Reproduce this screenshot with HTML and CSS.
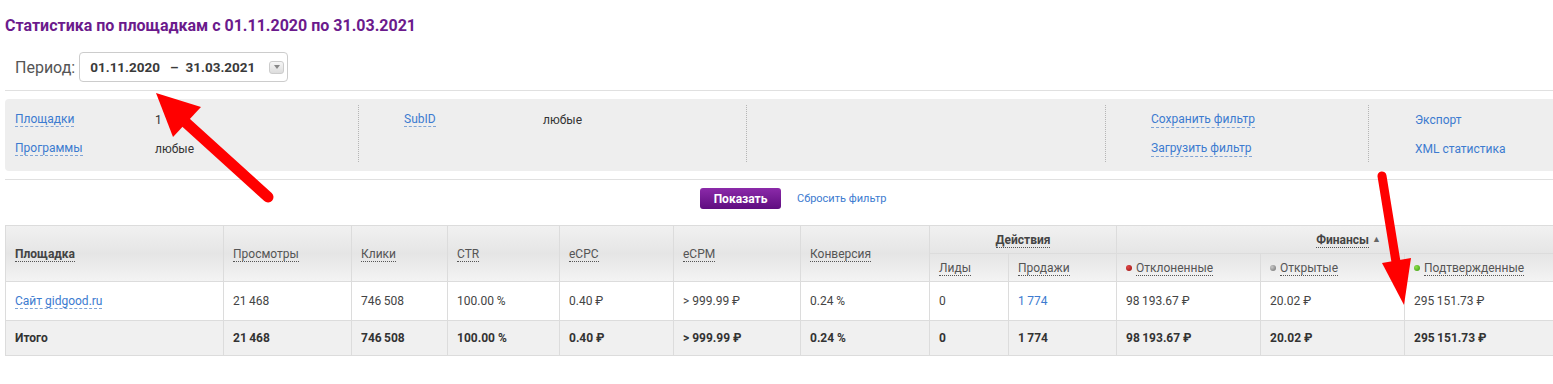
FILE: index.html
```html
<!DOCTYPE html>
<html lang="ru">
<head>
    <meta charset="UTF-8" />
    <title>Статистика по площадкам</title>
    <link rel="stylesheet" href="styles.css">
</head>
<body>
    <div class="page">
        <h1 class="title">Статистика по площадкам с 01.11.2020 по 31.03.2021</h1>

        <div class="period">
            <span class="period-label">Период:</span>
            <div class="date-box">
                <span class="date">01.11.2020</span>
                <span class="dash">&ndash;</span>
                <span class="date">31.03.2021</span>
                <span class="drop"><span class="drop-tri"></span></span>
            </div>
        </div>

        <div class="sep"></div>

        <div class="filter">
            <div class="fcol fcol-1">
                <div class="frow"><span class="flabel"><a class="link">Площадки</a></span><span class="fval">1 <i class="remove"></i></span></div>
                <div class="frow"><span class="flabel"><a class="link">Программы</a></span><span class="fval">любые</span></div>
            </div>
            <div class="fcol fcol-2">
                <div class="frow"><span class="flabel"><a class="link">SubID</a></span><span class="fval">любые</span></div>
            </div>
            <div class="fcol fcol-3"></div>
            <div class="fcol fcol-4">
                <div class="frow"><a class="link">Сохранить фильтр</a></div>
                <div class="frow"><a class="link">Загрузить фильтр</a></div>
            </div>
            <div class="fcol fcol-5">
                <div class="frow"><a class="plain-link">Экспорт</a></div>
                <div class="frow"><a class="plain-link">XML статистика</a></div>
            </div>
        </div>

        <div class="sep"></div>

        <div class="actions">
            <button class="btn-show">Показать</button>
            <a class="reset">Сбросить фильтр</a>
        </div>

        <table class="stats">
            <colgroup>
                <col style="width:218px"><col style="width:128px"><col style="width:96px">
                <col style="width:112px"><col style="width:114px"><col style="width:127px">
                <col style="width:129px"><col style="width:79px"><col style="width:108px">
                <col style="width:144px"><col style="width:144px"><col style="width:176px">
            </colgroup>
            <thead>
                <tr class="head-top">
                    <th rowspan="2"><span class="h h-main">Площадка</span></th>
                    <th rowspan="2"><span class="h">Просмотры</span></th>
                    <th rowspan="2"><span class="h">Клики</span></th>
                    <th rowspan="2"><span class="h">CTR</span></th>
                    <th rowspan="2"><span class="h">eCPC</span></th>
                    <th rowspan="2"><span class="h">eCPM</span></th>
                    <th rowspan="2"><span class="h">Конверсия</span></th>
                    <th colspan="2" class="group"><span class="h h-main">Действия</span></th>
                    <th colspan="3" class="group"><span class="h h-main">Финансы</span> <span class="sort">&#9650;</span></th>
                </tr>
                <tr class="head-sub">
                    <th><span class="h">Лиды</span></th>
                    <th><span class="h">Продажи</span></th>
                    <th><i class="dot dot-red"></i><span class="h">Отклоненные</span></th>
                    <th><i class="dot dot-grey"></i><span class="h">Открытые</span></th>
                    <th><i class="dot dot-green"></i><span class="h">Подтвержденные</span></th>
                </tr>
            </thead>
            <tbody>
                <tr class="row">
                    <td><a class="link">Сайт gidgood.ru</a></td>
                    <td>21&#8201;468</td>
                    <td>746&#8201;508</td>
                    <td>100.00 %</td>
                    <td>0.40 &#8381;</td>
                    <td>&gt; 999.99 &#8381;</td>
                    <td>0.24 %</td>
                    <td>0</td>
                    <td><span class="num-link">1&#8201;774</span></td>
                    <td>98&#8201;193.67 &#8381;</td>
                    <td>20.02 &#8381;</td>
                    <td>295&#8201;151.73 &#8381;</td>
                </tr>
                <tr class="total">
                    <td>Итого</td>
                    <td>21&#8201;468</td>
                    <td>746&#8201;508</td>
                    <td>100.00 %</td>
                    <td>0.40 &#8381;</td>
                    <td>&gt; 999.99 &#8381;</td>
                    <td>0.24 %</td>
                    <td>0</td>
                    <td>1&#8201;774</td>
                    <td>98&#8201;193.67 &#8381;</td>
                    <td>20.02 &#8381;</td>
                    <td>295&#8201;151.73 &#8381;</td>
                </tr>
            </tbody>
        </table>
    </div>

    <!-- red annotation arrows drawn over the screenshot -->
    <svg class="arrows" width="1553" height="384" viewBox="0 0 1553 384">
        <line x1="268" y1="197" x2="183" y2="120" stroke="#f00" stroke-width="11" stroke-linecap="round" />
        <polygon points="156,93 201,107 173,137" fill="#f00" />
        <line x1="1382" y1="176" x2="1396" y2="262" stroke="#f00" stroke-width="9" stroke-linecap="round" />
        <polygon points="1404,305 1411,258 1382,263" fill="#f00" />
    </svg>
</body>
</html>
```

FILE: styles.css
```css
html,
body {
    margin: 0;
    overflow: hidden;
}

body {
    font-family: Roboto, "Liberation Sans", Arial, sans-serif;
    color: #333;
    background: #fff;
    position: relative;
    height: 384px;
}

.page {
    width: 1580px;
    padding-left: 5px;
}

.title {
    margin: 0;
    padding-top: 17px;
    font-size: 16px;
    line-height: 18px;
    font-weight: 700;
    color: #6b1a8c;
}

/* period picker */
.period {
    display: flex;
    align-items: center;
    margin-top: 17px;
    padding-left: 10px;
}

.period-label {
    font-size: 16px;
    color: #555;
    margin-right: 4px;
}

.date-box {
    display: flex;
    align-items: center;
    width: 197px;
    height: 28px;
    border: 1px solid #ccc;
    border-radius: 4px;
    padding-left: 10px;
    box-sizing: content-box;
}

.date {
    font-size: 13.5px;
    font-weight: 700;
    color: #3a3a3a;
}

.dash {
    font-size: 13.5px;
    font-weight: 700;
    color: #3a3a3a;
    margin: 0 7px 0 10px;
}

.drop {
    margin-left: 14px;
    width: 13px;
    height: 11px;
    border: 1px solid #ccc;
    border-radius: 3px;
    background: linear-gradient(#f7f7f7, #dcdcdc);
    display: flex;
    align-items: center;
    justify-content: center;
}

.drop-tri {
    width: 0;
    height: 0;
    border-left: 3px solid transparent;
    border-right: 3px solid transparent;
    border-top: 4px solid #888;
}

.sep {
    height: 0;
    border-top: 1px solid #e0e0e0;
    margin-top: 8px;
}

/* filter panel */
.filter {
    display: flex;
    margin-top: 8px;
    height: 72px;
    background: #eee;
    border-radius: 4px;
    box-sizing: border-box;
    padding-top: 6px;
    font-size: 12px;
}

.fcol {
    position: relative;
}

.fcol + .fcol::before {
    content: "";
    position: absolute;
    left: 0;
    top: 0;
    height: 57px;
    border-left: 1px dotted #b5b5b5;
}

.fcol-1 {
    width: 343px;
    padding-left: 10px;
}

.fcol-2 {
    width: 342px;
    padding-left: 46px;
}

.fcol-3 {
    width: 359px;
}

.fcol-4 {
    width: 217px;
    padding-left: 46px;
}

.fcol-5 {
    padding-left: 47px;
}

.frow {
    display: flex;
    align-items: center;
    height: 29px;
}

.flabel {
    width: 140px;
    flex: none;
}

.fcol-2 .flabel {
    width: 139px;
}

.fval {
    color: #333;
    display: flex;
    align-items: center;
}

.remove {
    display: inline-block;
    width: 10px;
    height: 10px;
    border-radius: 50%;
    background: #ccc;
    margin-left: 6px;
}

.link {
    color: #3c7bd0;
    text-decoration: none;
    border-bottom: 1px dashed #7fa4d6;
    line-height: 15px;
}

.plain-link {
    color: #3c7bd0;
    text-decoration: none;
}

/* buttons */
.actions {
    display: flex;
    align-items: center;
    margin-top: 8px;
    padding-left: 695px;
}

.btn-show {
    width: 81px;
    height: 21px;
    border: none;
    border-radius: 3px;
    background: linear-gradient(#8b2aa9, #5f0d80);
    color: #fff;
    font-family: Roboto, "Liberation Sans", Arial, sans-serif;
    font-size: 12px;
    font-weight: 700;
    padding: 0;
}

.reset {
    margin-left: 16px;
    font-size: 11px;
    color: #3c7bd0;
}

/* stats table */
.stats {
    margin-top: 16px;
    border-collapse: collapse;
    table-layout: fixed;
    width: 1575px;
    font-size: 12px;
}

.stats th,
.stats td {
    border: 1px solid #dcdcdc;
    padding: 0 9px;
    text-align: left;
    white-space: nowrap;
}

.stats thead {
    background: linear-gradient(#f1f1f1, #e5e5e5 50%, #f4f4f4);
}

.stats th {
    font-weight: 400;
    color: #555;
}

.head-top {
    height: 28px;
}

.head-sub {
    height: 28px;
}

.stats th.group {
    text-align: center;
}

.h {
    border-bottom: 1px dotted #555;
    line-height: 14px;
}

.h-main {
    font-weight: 700;
    color: #444;
}

.sort {
    font-size: 9px;
    color: #666;
    vertical-align: 2px;
}

.dot {
    display: inline-block;
    width: 6px;
    height: 6px;
    border-radius: 50%;
    margin-right: 4px;
    vertical-align: 1px;
}

.dot-red {
    background: radial-gradient(circle at 35% 35%, #e04848, #9a0f0f);
}

.dot-grey {
    background: radial-gradient(circle at 35% 35%, #c8c8c8, #6f6f6f);
}

.dot-green {
    background: radial-gradient(circle at 35% 35%, #8de04a, #3a9a10);
}

.row {
    height: 39px;
}

.row td {
    color: #444;
}

.num-link {
    color: #3c7bd0;
}

.total {
    height: 35px;
    background: #f0f0f0;
}

.total td {
    font-weight: 700;
    color: #333;
}

.arrows {
    position: absolute;
    left: 0;
    top: 0;
    pointer-events: none;
}
```
